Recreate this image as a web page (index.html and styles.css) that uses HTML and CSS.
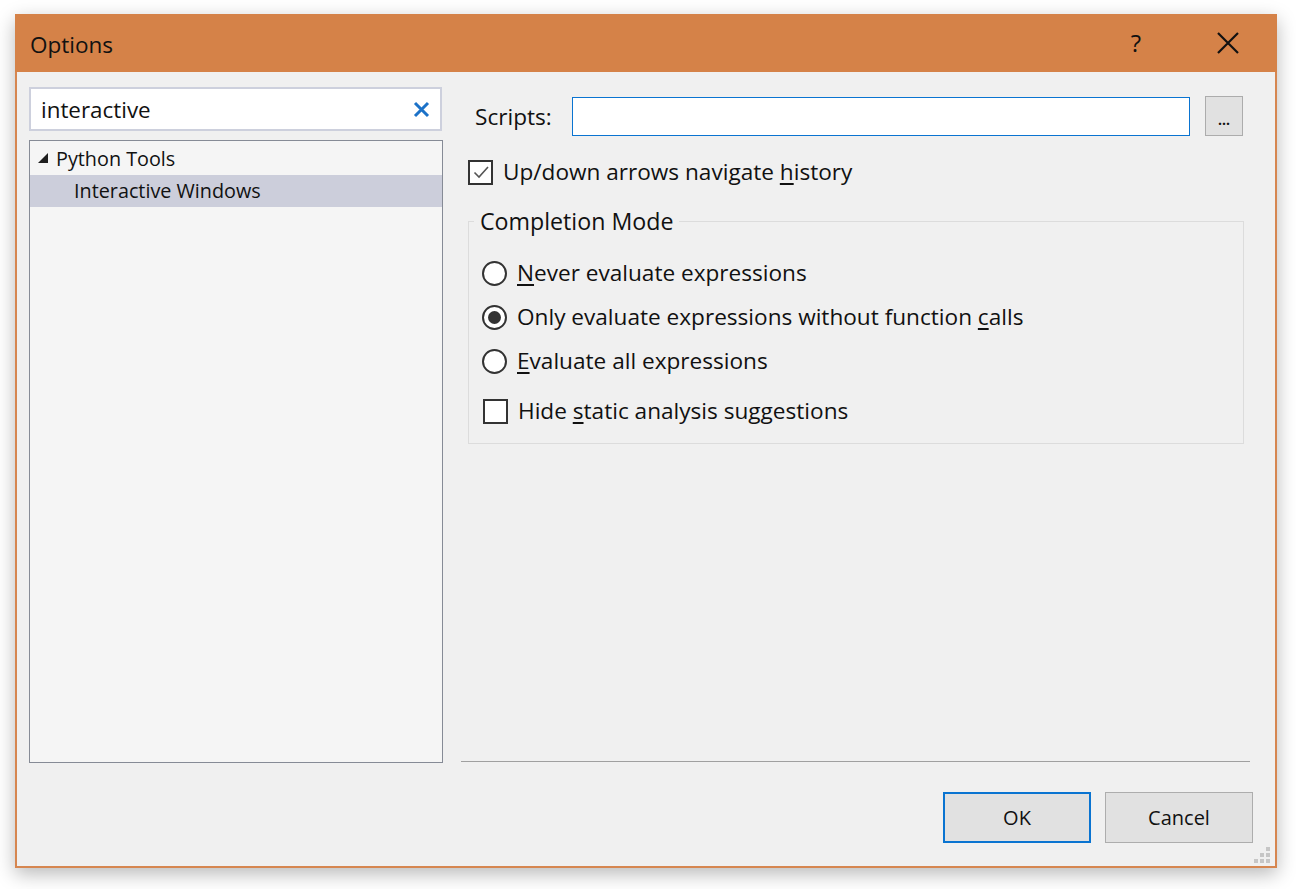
FILE: index.html
```html
<!DOCTYPE html>
<html lang="en">
<head>
<meta charset="utf-8">
<title>Options</title>
<link rel="stylesheet" href="styles.css">
</head>
<body>
<div class="window">
  <div class="titlebar">
    <span class="title">Options</span>
    <div class="title-buttons">
      <span class="help">?</span>
      <span class="close">
        <svg width="22" height="22" viewBox="0 0 22 22"><path d="M1 1 L21 21 M21 1 L1 21" stroke="#111" stroke-width="2.2" fill="none"/></svg>
      </span>
    </div>
  </div>
  <div class="content">
    <div class="left">
      <div class="search">
        <span class="search-text">interactive</span>
        <svg class="clear" width="17" height="17" viewBox="0 0 17 17"><path d="M2 2 L15 15 M15 2 L2 15" stroke="#1c72c8" stroke-width="3" fill="none"/></svg>
      </div>
      <div class="tree">
        <div class="tree-row">
          <svg class="expander" width="12" height="12" viewBox="0 0 12 12"><path d="M11 1 L11 11 L1 11 Z" fill="#1e1e1e"/></svg>
          <span>Python Tools</span>
        </div>
        <div class="tree-row child selected"><span>Interactive Windows</span></div>
      </div>
    </div>
    <div class="right">
      <div class="settings">
        <div class="scripts-row">
          <span class="label">Scripts:</span>
          <div class="textbox"></div>
          <div class="browse">...</div>
        </div>
        <div class="check-row">
          <span class="checkbox">
            <svg width="20" height="20" viewBox="0 0 20 20"><path d="M3.5 10.5 L8 15 L17 5" stroke="#555" stroke-width="1.6" fill="none"/></svg>
          </span>
          <span>Up/down arrows navigate <u>h</u>istory</span>
        </div>
        <fieldset class="group">
          <legend>Completion Mode</legend>
          <div class="radio-row first"><span class="radio"></span><span><u>N</u>ever evaluate expressions</span></div>
          <div class="radio-row"><span class="radio on"></span><span>Only evaluate expressions without function <u>c</u>alls</span></div>
          <div class="radio-row"><span class="radio"></span><span><u>E</u>valuate all expressions</span></div>
          <div class="check-row inner"><span class="checkbox"></span><span>Hide <u>s</u>tatic analysis suggestions</span></div>
        </fieldset>
      </div>
      <div class="separator"></div>
      <div class="footer">
        <div class="btn default">OK</div>
        <div class="btn">Cancel</div>
      </div>
      <div class="grip">
        <span></span><span></span><span></span><span></span><span></span><span></span>
      </div>
    </div>
  </div>
</div>
</body>
</html>
```

FILE: styles.css
```css
html, body {
  margin: 0;
  padding: 0;
  background: #ffffff;
}
body {
  font-family: "Open Sans", "Noto Sans", sans-serif;
  font-size: 19.8px;
  color: #111;
  width: 1296px;
  height: 889px;
  overflow: hidden;
}
u {
  text-decoration: underline;
  text-decoration-thickness: 1.5px;
  text-underline-offset: 3px;
}
.window {
  margin: 14px 0 0 15px;
  width: 1262px;
  height: 854px;
  box-sizing: border-box;
  border: 2px solid #d68650;
  border-top: none;
  background: #f0f0f0;
  box-shadow: 0 6px 18px rgba(0,0,0,0.28);
  display: flex;
  flex-direction: column;
}
.titlebar {
  height: 58px;
  margin: 0 -2px;
  background: #d58248;
  display: flex;
  align-items: center;
  justify-content: space-between;
  padding: 0 0 0 15px;
  box-sizing: border-box;
}
.title {
  font-size: 22.5px;
  color: #111;
  margin-top: 2px;
}
.title-buttons {
  display: flex;
  align-items: center;
  height: 100%;
}
.help {
  font-size: 24px;
  width: 90px;
  text-align: center;
  margin-top: -2px;
  margin-right: 2px;
}
.close {
  width: 90px;
  display: flex;
  justify-content: center;
  margin-top: 0;
  margin-right: 4px;
}
.content {
  flex: 1;
  display: flex;
  align-items: flex-start;
  padding: 15px 22px 0 12px;
}
.left {
  width: 414px;
  display: flex;
  flex-direction: column;
}
.search {
  height: 44px;
  width: 413px;
  box-sizing: border-box;
  border: 2px solid #cdd0dd;
  background: #fff;
  display: flex;
  align-items: center;
  justify-content: space-between;
  padding: 0 10px 0 10px;
}
.search-text {
  font-size: 22.4px;
  margin-top: 0;
}
.tree {
  margin-top: 9px;
  height: 623px;
  box-sizing: border-box;
  border: 1px solid #868b96;
  background: #f5f5f5;
  padding-top: 2px;
}
.tree-row {
  height: 32px;
  display: flex;
  align-items: center;
  padding-left: 7px;
}
.tree-row span {
  margin-top: -2px;
}
.expander {
  margin-right: 7px;
  margin-top: -2px;
}
.tree-row.child {
  padding-left: 44px;
}
.tree-row.selected {
  background: #cccedb;
}
.right {
  flex: 1;
  margin-left: 18px;
  display: flex;
  flex-direction: column;
  font-size: 22.6px;
}
.settings {
  height: 674px;
  padding-top: 9px;
  box-sizing: border-box;
}
.scripts-row {
  display: flex;
  align-items: center;
  padding-left: 14px;
  padding-right: 10px;
}
.label {
  width: 97px;
  margin-top: 1px;
}
.textbox {
  flex: 1;
  height: 39px;
  box-sizing: border-box;
  border: 1px solid #0a74d1;
  background: #fff;
}
.browse {
  margin-left: 15px;
  width: 38px;
  height: 40px;
  box-sizing: border-box;
  border: 1px solid #acacac;
  background: #e1e1e1;
  font-size: 14px;
  font-weight: bold;
  display: flex;
  justify-content: center;
  align-items: flex-end;
  padding-bottom: 6px;
}
.check-row {
  display: flex;
  align-items: center;
  margin-top: 23px;
  margin-left: 7px;
  height: 26px;
}
.checkbox {
  width: 25px;
  height: 25px;
  box-sizing: border-box;
  border: 2px solid #333;
  background: #fff;
  margin-right: 10px;
  display: flex;
  align-items: center;
  justify-content: center;
}
.check-row > span:last-child {
  margin-top: -2px;
}
.group {
  margin: 23px 9px 0 7px;
  border: 1px solid #dcdcdc;
  padding: 0 0 19px 13px;
  min-width: 0;
}
.group legend {
  margin-left: -8px;
  padding: 0 6px;
  line-height: 26px;
  font-size: 23.2px;
}
.radio-row {
  display: flex;
  align-items: center;
  height: 26px;
  margin-top: 18px;
}
.radio-row.first {
  margin-top: 26px;
}
.radio {
  width: 25px;
  height: 25px;
  box-sizing: border-box;
  border: 2px solid #333;
  border-radius: 50%;
  background: #fff;
  margin-right: 10px;
  display: flex;
  align-items: center;
  justify-content: center;
}
.radio.on::after {
  content: "";
  width: 13px;
  height: 13px;
  border-radius: 50%;
  background: #333;
}
.radio-row > span:last-child {
  margin-top: -2px;
}
.check-row.inner {
  margin-left: 1px;
  margin-top: 24px;
}
.separator {
  height: 1px;
  background: #a0a0a0;
  margin-right: 3px;
}
.footer {
  display: flex;
  justify-content: flex-end;
  gap: 14px;
  margin-top: 30px;
  font-size: 20px;
}
.btn {
  width: 148px;
  height: 51px;
  box-sizing: border-box;
  border: 1px solid #adadad;
  background: #e1e1e1;
  display: flex;
  align-items: center;
  justify-content: center;
}
.btn.default {
  border: 2px solid #0a74d1;
}
.grip {
  align-self: flex-end;
  margin-right: -17px;
  margin-top: 4px;
  width: 17px;
  height: 16px;
  display: grid;
  grid-template-columns: 4px 4px 4px;
  grid-template-rows: 4px 4px 4px;
  gap: 2px;
  justify-content: end;
}
.grip span {
  background: #c6c6c6;
}
.grip span:nth-child(1) { grid-column: 3; grid-row: 1; }
.grip span:nth-child(2) { grid-column: 2; grid-row: 2; }
.grip span:nth-child(3) { grid-column: 3; grid-row: 2; }
.grip span:nth-child(4) { grid-column: 1; grid-row: 3; }
.grip span:nth-child(5) { grid-column: 2; grid-row: 3; }
.grip span:nth-child(6) { grid-column: 3; grid-row: 3; }
```
